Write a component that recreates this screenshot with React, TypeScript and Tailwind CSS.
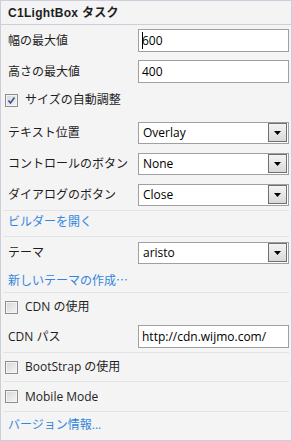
import React from "react";

const font = { fontFamily: '"Open Sans", "Noto Sans CJK JP", sans-serif' };
const cjk = { fontFamily: '"Noto Sans CJK JP", sans-serif' };
const headFont = { fontFamily: '"Liberation Sans", "Noto Sans CJK JP", sans-serif' };

function Separator() {
  return <div className="mx-[2px] h-px bg-[#e3e3e6]" />;
}

function CheckBox({ checked }: { checked?: boolean }) {
  return (
    <span className="flex h-[13px] w-[13px] shrink-0 items-center justify-center border border-[#8e8f8f] bg-gradient-to-br from-[#d6d6d6] to-[#f6f6f6]">
      <span className="flex h-[11px] w-[11px] items-center justify-center border border-[#f4f4f4]">
        {checked && (
          <svg width="9" height="9" viewBox="0 0 9 9">
            <path d="M1.5 4.5 L3.5 7 L7.5 1.5" stroke="#3c4f91" strokeWidth="1.6" fill="none" />
          </svg>
        )}
      </span>
    </span>
  );
}

function TextBox({ value, caret }: { value: string; caret?: boolean }) {
  return (
    <div className="relative flex h-[23px] w-[151px] items-center border border-[#a0a0a0] bg-white pl-[3px] text-[12px] text-black">
      {value}
      {caret && <span className="absolute left-[3px] top-[2px] h-[17px] w-px bg-black" />}
    </div>
  );
}

function DropDown({ value }: { value: string }) {
  return (
    <div className="flex h-[22px] w-[151px] items-center justify-between border border-[#a0a0a0] bg-white pl-[4px] pr-px text-[12px] text-black">
      <span>{value}</span>
      <span className="flex h-[19px] w-[19px] items-center justify-center border border-[#6f6f6f] bg-gradient-to-b from-[#f4f4f4] to-[#d9d9d9]">
        <svg width="7" height="4" viewBox="0 0 7 4">
          <path d="M0 0 H7 L3.5 4 Z" fill="#000" />
        </svg>
      </span>
    </div>
  );
}

function FieldRow({ label, children }: { label: string; children: React.ReactNode }) {
  return (
    <div className="flex h-[31px] items-center justify-between pl-[7px] pr-[2px]">
      <span className="text-[12px] text-[#1e1e1e]">{label}</span>
      {children}
    </div>
  );
}

function CheckRow({ label, checked, h }: { label: string; checked?: boolean; h: string }) {
  return (
    <div className={`flex items-center gap-[7px] pl-[4px] ${h}`}>
      <CheckBox checked={checked} />
      <span className="text-[12px] text-[#1e1e1e]">{label}</span>
    </div>
  );
}

function LinkRow({ children, h }: { children: React.ReactNode; h: string }) {
  return (
    <div className={`flex items-center pl-[7px] text-[12px] text-[#3385dd] ${h}`}>{children}</div>
  );
}

export default function App() {
  return (
    <div
      className="flex h-[441px] w-[292px] flex-col border border-[#cdcddb] bg-[#f4f4f4]"
      style={font}
    >
      <div
        className="flex h-[24px] items-center border-b border-[#cdcddb] pl-[7px] text-[12px] font-bold tracking-[0.3px] text-[#1e1e1e]"
        style={headFont}
      >
        C1LightBox タスク
      </div>
      <FieldRow label="幅の最大値">
        <TextBox value="600" caret />
      </FieldRow>
      <FieldRow label="高さの最大値">
        <TextBox value="400" />
      </FieldRow>
      <CheckRow label="サイズの自動調整" checked h="h-[26px]" />
      <div className="h-[4px]" />
      <FieldRow label="テキスト位置">
        <DropDown value="Overlay" />
      </FieldRow>
      <FieldRow label="コントロールのボタン">
        <DropDown value="None" />
      </FieldRow>
      <FieldRow label="ダイアログのボタン">
        <DropDown value="Close" />
      </FieldRow>
      <Separator />
      <LinkRow h="h-[25px] pb-[3px]">ビルダーを開く</LinkRow>
      <Separator />
      <FieldRow label="テーマ">
        <DropDown value="aristo" />
      </FieldRow>
      <LinkRow h="h-[24px]">
        <span style={cjk}>新しいテーマの作成…</span>
      </LinkRow>
      <Separator />
      <CheckRow label="CDN の使用" h="h-[28px]" />
      <FieldRow label="CDN パス">
        <TextBox value="http://cdn.wijmo.com/" />
      </FieldRow>
      <Separator />
      <CheckRow label="BootStrap の使用" h="h-[28px]" />
      <Separator />
      <CheckRow label="Mobile Mode" h="h-[29px]" />
      <Separator />
      <LinkRow h="h-[26px]">バージョン情報...</LinkRow>
    </div>
  );
}
